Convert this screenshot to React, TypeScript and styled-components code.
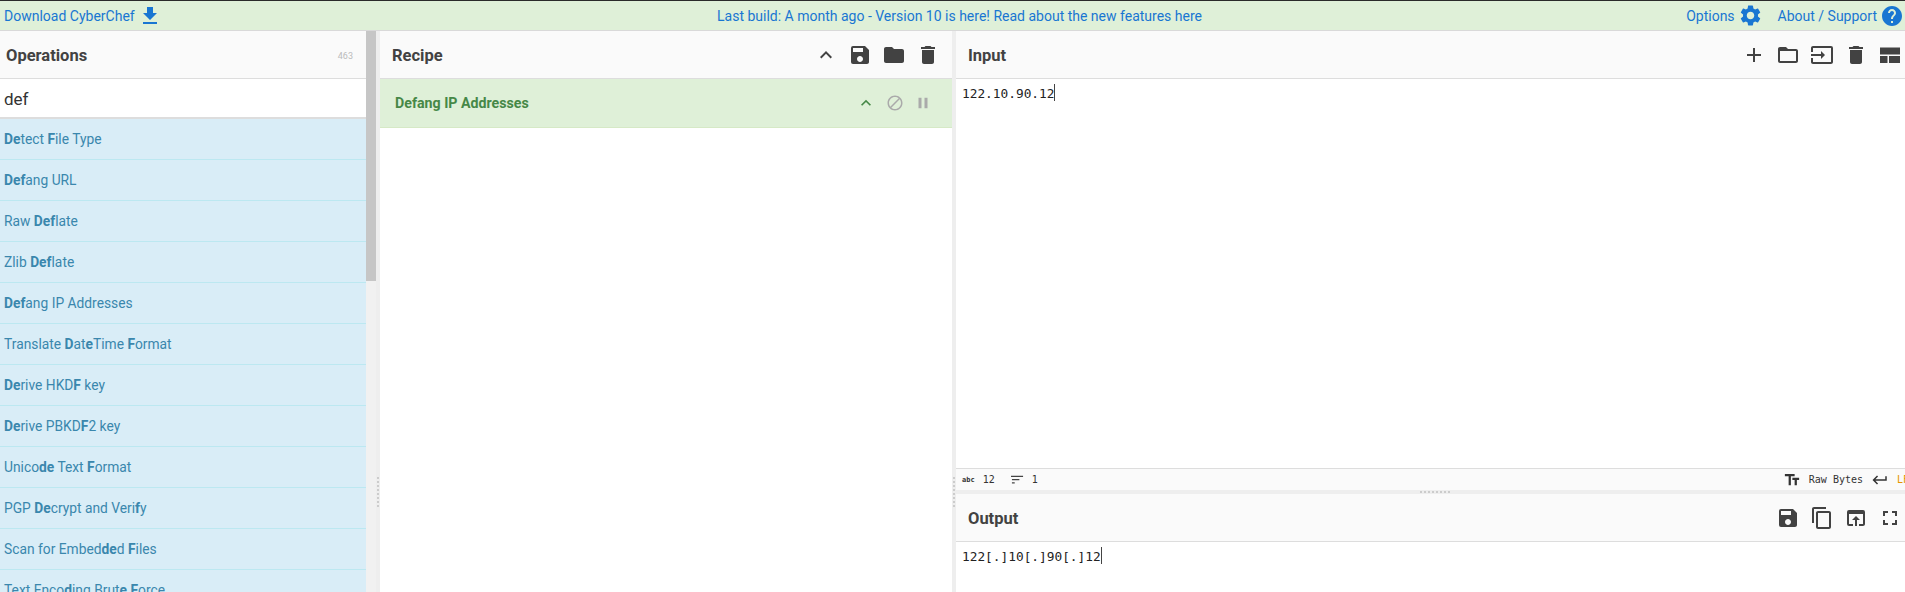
import React from 'react';
import styled, { createGlobalStyle } from 'styled-components';
import {
  MdAdd,
  MdBlock,
  MdContentCopy,
  MdDelete,
  MdFileDownload,
  MdFolder,
  MdFolderOpen,
  MdFullscreen,
  MdHelp,
  MdInput,
  MdKeyboardArrowUp,
  MdKeyboardReturn,
  MdOpenInBrowser,
  MdPause,
  MdSave,
  MdSettings,
  MdTextFields,
} from 'react-icons/md';

const GlobalStyle = createGlobalStyle`
  html, body {
    margin: 0;
    height: 100%;
    overflow: hidden;
    background: #fff;
    font-family: Roboto, "Open Sans", sans-serif;
  }
  * { box-sizing: border-box; }
`;

const operations = [
  '*De*tect *F*ile Type',
  '*Def*ang URL',
  'Raw *Def*late',
  'Zlib *Def*late',
  '*Def*ang IP Addresses',
  'Translate *D*at*e*Time *F*ormat',
  '*De*rive HKD*F* key',
  '*De*rive PBKD*F*2 key',
  'Unico*de* Text *F*ormat',
  'PGP *De*crypt and Veri*f*y',
  'Scan for Embed*de*d *F*iles',
  'Text Enco*d*ing Brut*e* *F*orce',
];

const App = () => {
  return (
    <Page>
      <GlobalStyle />
      <Banner>
        <BannerLink>
          Download CyberChef
          <MdFileDownload size={24} />
        </BannerLink>
        <BannerNotice>Last build: A month ago - Version 10 is here! Read about the new features here</BannerNotice>
        <BannerRight>
          <BannerLink>
            Options
            <MdSettings size={25} />
          </BannerLink>
          <BannerLink>
            About / Support
            <MdHelp size={24} />
          </BannerLink>
        </BannerRight>
      </Banner>

      <Workspace>
        <OperationsPane>
          <OperationsMain>
            <OperationsHeader>
              <Title>Operations</Title>
              <Count>463</Count>
            </OperationsHeader>
            <Search>def</Search>
            <OperationList>
              {operations.map((op) => (
                <Operation key={op}>
                  {op.split('*').map((part, i) => (i % 2 ? <b key={i}>{part}</b> : part))}
                </Operation>
              ))}
            </OperationList>
          </OperationsMain>
          <Scrollbar>
            <ScrollThumb />
          </Scrollbar>
        </OperationsPane>

        <Gutter>
          <GutterDots />
        </Gutter>

        <RecipePane>
          <PaneHeader>
            <Title>Recipe</Title>
            <RecipeHeaderTools>
              <MdKeyboardArrowUp size={24} />
              <MdSave size={24} />
              <MdFolder size={24} />
              <MdDelete size={24} />
            </RecipeHeaderTools>
          </PaneHeader>
          <RecipeItem>
            <RecipeName>Defang IP Addresses</RecipeName>
            <RecipeTools>
              <MdKeyboardArrowUp size={20} color="#468847" />
              <MdBlock size={18} />
              <MdPause size={18} />
            </RecipeTools>
          </RecipeItem>
        </RecipePane>

        <Gutter>
          <GutterDots />
        </Gutter>

        <IoPane>
          <InputArea>
            <PaneHeader>
              <Title>Input</Title>
              <Tools>
                <MdAdd size={24} />
                <MdFolderOpen size={24} />
                <MdInput size={24} />
                <MdDelete size={24} />
                <svg width="24" height="24" viewBox="0 0 24 24" fill="currentColor">
                  <path d="M2 4.500h20v7H2zM2 13h7.500v7H2zM11 13h11v7H11z" />
                </svg>
              </Tools>
            </PaneHeader>
            <Editor>
              122.10.90.12
              <Caret />
            </Editor>
            <StatusBar>
              <StatusGroup>
                <StatusAbc>abc</StatusAbc>
                <span>12</span>
                <LinesIcon viewBox="0 0 14 10">
                  <path d="M0 1h13M1 4.500h8M1 8h3" stroke="#444" strokeWidth="1.300" />
                </LinesIcon>
                <span>1</span>
              </StatusGroup>
              <StatusGroup>
                <MdTextFields size={18} />
                <span>Raw Bytes</span>
                <MdKeyboardReturn size={18} />
                <StatusAccent>LF</StatusAccent>
              </StatusGroup>
            </StatusBar>
          </InputArea>
          <HorizontalGutter>
            <HorizontalDots />
          </HorizontalGutter>
          <OutputArea>
            <PaneHeader>
              <Title>Output</Title>
              <Tools>
                <MdSave size={24} />
                <MdContentCopy size={24} />
                <MdOpenInBrowser size={24} />
                <MdFullscreen size={24} />
              </Tools>
            </PaneHeader>
            <Editor>
              122[.]10[.]90[.]12
              <Caret />
            </Editor>
          </OutputArea>
        </IoPane>
      </Workspace>
    </Page>
  );
};

const Page = styled.div`
  height: 592px;
  display: flex;
  flex-direction: column;
  overflow: hidden;
  border-top: 1px solid #2a2a2a;
`;

const Banner = styled.div`
  flex: 0 0 30px;
  display: grid;
  grid-template-columns: 1fr auto 1fr;
  align-items: center;
  padding: 0 1px 0 4px;
  background: #dff0d8;
  border-bottom: 1px solid #d9d9d9;
  font-size: 14px;
  color: #1976d2;
`;

const BannerLink = styled.span`
  display: inline-flex;
  align-items: center;
  gap: 3px;
  color: #1976d2;
  white-space: nowrap;
`;

const BannerNotice = styled.span`
  margin-left: 11px;
  color: #1976d2;
`;

const BannerRight = styled.div`
  display: flex;
  justify-content: flex-end;
  gap: 15px;
`;

const Workspace = styled.div`
  flex: 1;
  min-height: 0;
  display: flex;
`;

const OperationsPane = styled.div`
  flex: 0 0 376px;
  display: flex;
`;

const OperationsMain = styled.div`
  flex: 0 0 366px;
  display: flex;
  flex-direction: column;
  min-width: 0;
`;

const OperationsHeader = styled.div`
  flex: 0 0 48px;
  display: flex;
  align-items: center;
  justify-content: space-between;
  padding: 2px 13px 0 6px;
  background: #fafafa;
  border-bottom: 1px solid #ddd;
`;

const Title = styled.h2`
  margin: 0;
  font-size: 16.500px;
  font-weight: 700;
  color: #424242;
`;

const Count = styled.span`
  font-size: 9px;
  color: #bbb;
`;

const Search = styled.div`
  flex: 0 0 40px;
  display: flex;
  align-items: center;
  padding: 2px 0 0 4px;
  font-size: 17px;
  color: #333;
  background: #fff;
  border-bottom: 2px solid #ddd;
`;

const OperationList = styled.div`
  flex: 1;
  min-height: 0;
  overflow: hidden;
`;

const Operation = styled.div`
  height: 41px;
  line-height: 40px;
  white-space: pre;
  padding-left: 4px;
  font-size: 13.800px;
  color: #3a87ad;
  background: #d9edf7;
  border-bottom: 1px solid #bce8f1;

  b {
    font-weight: 700;
  }
`;

const Scrollbar = styled.div`
  flex: 0 0 10px;
  background: #f1f1f1;
`;

const ScrollThumb = styled.div`
  height: 250px;
  background: #c6c6c6;
`;

const Gutter = styled.div`
  flex: 0 0 4px;
  display: flex;
  justify-content: center;
  background: #eee;
`;

const GutterDots = styled.div`
  width: 2px;
  height: 30px;
  margin-top: 446px;
  background: repeating-linear-gradient(to bottom, #ccc 0 2px, transparent 2px 4px);
`;

const RecipePane = styled.div`
  flex: 0 0 572px;
  display: flex;
  flex-direction: column;
`;

const PaneHeader = styled.div`
  flex: 0 0 48px;
  display: flex;
  align-items: center;
  justify-content: space-between;
  padding: 0 0 0 12px;
  background: #fafafa;
  border-bottom: 1px solid #ddd;

  h2 {
    padding-top: 2px;
  }
`;

const Tools = styled.div`
  display: flex;
  align-items: center;
  gap: 10px;
  padding-right: 3px;
  color: #424242;
`;

const RecipeHeaderTools = styled(Tools)`
  padding-right: 12px;
`;

const RecipeItem = styled.div`
  flex: 0 0 49px;
  display: flex;
  align-items: center;
  justify-content: space-between;
  padding: 0 20px 0 15px;
  background: #dff0d8;
  border-bottom: 1px solid #d6e9c6;
`;

const RecipeName = styled.span`
  font-size: 14.200px;
  font-weight: 700;
  color: #468847;
`;

const RecipeTools = styled.div`
  display: flex;
  align-items: center;
  gap: 10px;
  color: #aaa;
`;

const IoPane = styled.div`
  flex: 1;
  min-width: 0;
  display: flex;
  flex-direction: column;
`;

const InputArea = styled.div`
  flex: 0 0 459px;
  display: flex;
  flex-direction: column;
`;

const OutputArea = styled.div`
  flex: 1;
  min-height: 0;
  display: flex;
  flex-direction: column;
`;

const Editor = styled.div`
  flex: 1;
  min-height: 0;
  padding: 5px 6px;
  font-family: "DejaVu Sans Mono", "Liberation Mono", monospace;
  font-size: 12.800px;
  line-height: 16px;
  color: #222;
  background: #fff;
`;

const Caret = styled.span`
  display: inline-block;
  width: 1px;
  height: 17px;
  vertical-align: text-bottom;
  background: #444;
`;

const StatusBar = styled.div`
  flex: 0 0 22px;
  display: flex;
  align-items: center;
  justify-content: space-between;
  overflow: hidden;
  padding-left: 6px;
  background: #fafafa;
  border-top: 1px solid #ddd;
  font-family: "DejaVu Sans Mono", "Liberation Mono", monospace;
  font-size: 10px;
  color: #333;
`;

const StatusGroup = styled.div`
  display: flex;
  align-items: center;
  gap: 8px;
  color: #333;
`;

const StatusAbc = styled.span`
  font-size: 7px;
  font-weight: 700;
`;

const StatusAccent = styled.span`
  color: #e59400;
  width: 8px;
  overflow: hidden;
`;

const LinesIcon = styled.svg`
  width: 13px;
  height: 10px;
  margin-left: 8px;
`;

const HorizontalGutter = styled.div`
  flex: 0 0 4px;
  display: flex;
  align-items: center;
  justify-content: center;
  background: #eee;
`;

const HorizontalDots = styled.div`
  width: 30px;
  height: 2px;
  margin-left: 8px;
  background: repeating-linear-gradient(to right, #ccc 0 2px, transparent 2px 4px);
`;

export default App;
